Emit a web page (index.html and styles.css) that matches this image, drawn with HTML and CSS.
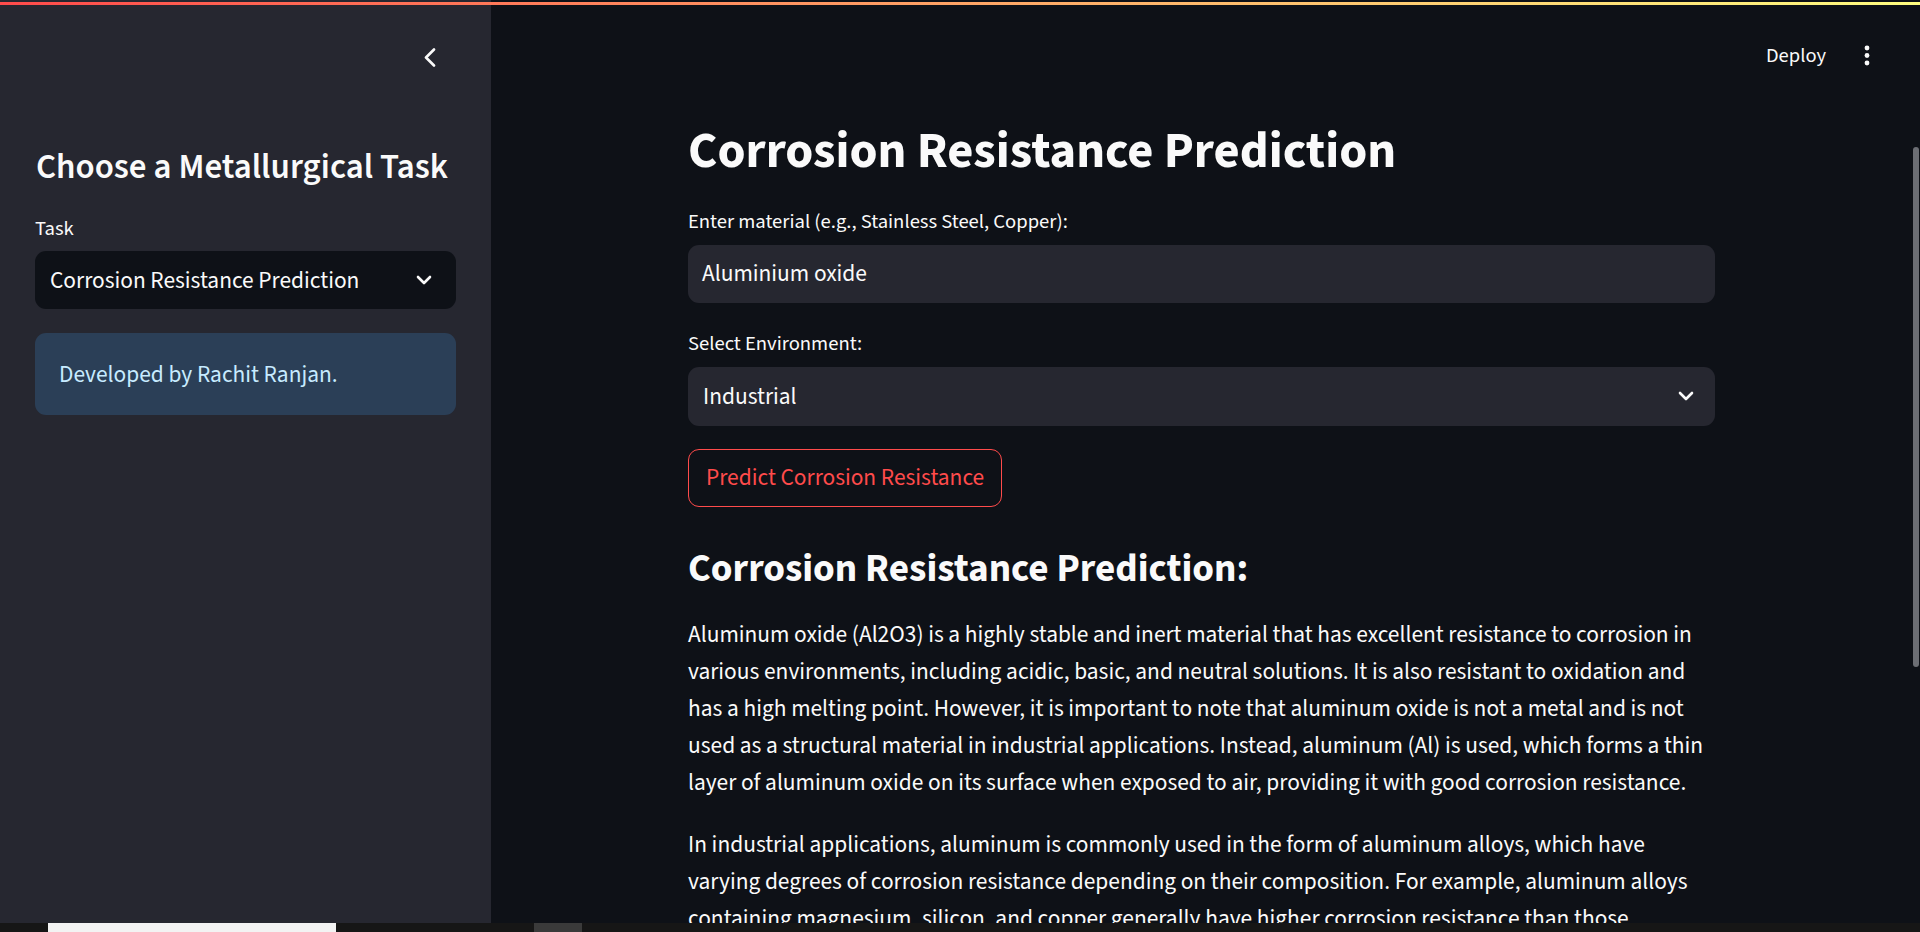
FILE: index.html
```html
<!DOCTYPE html>
<html lang="en">
<head>
<meta charset="utf-8">
<title>Corrosion Resistance Prediction</title>
<link rel="stylesheet" href="styles.css">
</head>
<body>
<div class="app">
  <aside class="sidebar">
    <div class="side-top">
      <button class="collapse" aria-label="Collapse sidebar">
        <svg width="13" height="19" viewBox="0 0 13 19"><polyline points="11,1.5 3,9.5 11,17.5" fill="none" stroke="#fafafa" stroke-width="2.6" stroke-linecap="round" stroke-linejoin="round"/></svg>
      </button>
    </div>
    <h2 class="side-title">Choose a Metallurgical Task</h2>
    <div class="label">Task</div>
    <div class="select select-dark">
      <span>Corrosion Resistance Prediction</span>
      <svg class="chev" width="16" height="11" viewBox="0 0 16 11"><polyline points="2,2 8,8 14,2" fill="none" stroke="#fafafa" stroke-width="2.6" stroke-linecap="round" stroke-linejoin="round"/></svg>
    </div>
    <div class="info">Developed by Rachit Ranjan.</div>
  </aside>

  <main class="main">
    <header class="header">
      <span class="deploy">Deploy</span>
      <svg class="kebab" width="6" height="22" viewBox="0 0 6 22"><circle cx="3" cy="3" r="2.4" fill="#fafafa"/><circle cx="3" cy="10.5" r="2.4" fill="#fafafa"/><circle cx="3" cy="18" r="2.4" fill="#fafafa"/></svg>
    </header>

    <div class="block">
      <h1 class="title">Corrosion Resistance Prediction</h1>

      <div class="label label-first">Enter material (e.g., Stainless Steel, Copper):</div>
      <div class="input">Aluminium oxide</div>

      <div class="label">Select Environment:</div>
      <div class="select select-main">
        <span>Industrial</span>
        <svg class="chev" width="16" height="11" viewBox="0 0 16 11"><polyline points="2,2 8,8 14,2" fill="none" stroke="#fafafa" stroke-width="2.6" stroke-linecap="round" stroke-linejoin="round"/></svg>
      </div>

      <button class="btn">Predict Corrosion Resistance</button>

      <h3 class="subtitle">Corrosion Resistance Prediction:</h3>

      <p class="para">Aluminum oxide (Al2O3) is a highly stable and inert material that has excellent resistance to corrosion in various environments, including acidic, basic, and neutral solutions. It is also resistant to oxidation and has a high melting point. However, it is important to note that aluminum oxide is not a metal and is not used as a structural material in industrial applications. Instead, aluminum (Al) is used, which forms a thin layer of aluminum oxide on its surface when exposed to air, providing it with good corrosion resistance.</p>

      <p class="para para-next">In industrial applications, aluminum is commonly used in the form of aluminum alloys, which have varying degrees of corrosion resistance depending on their composition. For example, aluminum alloys containing magnesium, silicon, and copper generally have higher corrosion resistance than those containing other elements. Protective coatings and anodizing can further improve their performance in industrial atmospheres.</p>
    </div>

    <div class="scroll-thumb"></div>
  </main>
</div>

<div class="taskbar">
  <span class="tb-white"></span>
  <span class="tb-gray"></span>
</div>

<div class="decoration"></div>
</body>
</html>
```
FILE: styles.css
```css
html, body {
  margin: 0;
  padding: 0;
  height: 932px;
  overflow: hidden;
  background: #0e1117;
}

body {
  font-family: "Source Sans 3", "Source Sans Pro", Lato, sans-serif;
  color: #fafafa;
  position: relative;
}

.app {
  display: flex;
  height: 923px;
}

/* ---------- sidebar ---------- */
.sidebar {
  width: 491px;
  flex: none;
  box-sizing: border-box;
  background: #262730;
  padding: 0 35px;
  display: flex;
  flex-direction: column;
}

.side-top {
  height: 146px;
  box-sizing: border-box;
  padding-top: 48px;
  padding-right: 20px;
  display: flex;
  justify-content: flex-end;
  align-items: flex-start;
}

.collapse {
  background: none;
  border: 0;
  padding: 0;
  width: 13px;
  height: 19px;
  display: block;
}

.collapse svg { display: block; }

.side-title {
  margin: 0;
  font-size: 34.9px;
  font-weight: 600;
  line-height: 42px;
  padding-left: 1px;
}

.label {
  font-size: 20.6px;
  line-height: 28px;
  margin-top: 26.5px;
  color: #fafafa;
}

.select {
  display: flex;
  align-items: center;
  justify-content: space-between;
  border-radius: 11px;
  font-size: 23.4px;
  box-sizing: border-box;
}

.select-dark {
  margin-top: 8.5px;
  height: 58px;
  background: #0e1117;
  padding: 0 24px 0 15px;
}

.chev { display: block; flex: none; }

.info {
  margin-top: 24px;
  height: 82px;
  box-sizing: border-box;
  border-radius: 11px;
  background: #2b3f57;
  color: #c7ebff;
  font-size: 23.4px;
  padding: 0 24px;
  display: flex;
  align-items: center;
}

/* ---------- main ---------- */
.main {
  flex: 1;
  position: relative;
  background: #0e1117;
  overflow: hidden;
}

.header {
  height: 100px;
  box-sizing: border-box;
  display: flex;
  justify-content: flex-end;
  align-items: flex-start;
  padding-right: 50px;
  padding-top: 41.6px;
}

.deploy {
  font-size: 20.5px;
  line-height: 28px;
  color: #fafafa;
  margin-right: 38px;
}

.kebab {
  display: block;
  margin-top: 3px;
}

.block {
  margin-left: 197px;
  width: 1027px;
  padding-top: 20.6px;
}

.title {
  margin: 0;
  font-size: 50.6px;
  font-weight: 700;
  line-height: 60.7px;
}

.block .label { margin-top: 27.5px; }
.block .label-first { margin-top: 26.5px; }
.block .label + .select { margin-top: 9.1px; }

.input {
  margin-top: 9.2px;
  height: 57.7px;
  box-sizing: border-box;
  background: #262730;
  border-radius: 11px;
  font-size: 23.4px;
  padding: 0 14px;
  display: flex;
  align-items: center;
}

.select-main {
  height: 58.4px;
  background: #262730;
  padding: 0 21px 0 15px;
}

.btn {
  display: block;
  margin-top: 23.6px;
  height: 57.4px;
  box-sizing: border-box;
  padding: 0 17px;
  background: #0e1117;
  border: 1px solid #ff4b4b;
  border-radius: 11px;
  color: #ff4b4b;
  font-family: inherit;
  font-size: 23.4px;
}

.subtitle {
  margin: 39.3px 0 0;
  font-size: 39.2px;
  font-weight: 700;
  line-height: 47px;
}

.para {
  margin: 24.5px 0 0;
  font-size: 23.4px;
  line-height: 36.8px;
}

.para-next { margin-top: 25.5px; }

.scroll-thumb {
  position: absolute;
  right: 1px;
  top: 147px;
  width: 6px;
  height: 520px;
  border-radius: 3px;
  background: #6c6e74;
}

/* ---------- overlays ---------- */
.decoration {
  position: absolute;
  top: 2px;
  left: 0;
  right: 0;
  height: 3px;
  background: linear-gradient(90deg, #ff4b4b, #fffd80);
}

.taskbar {
  height: 9px;
  background: #161616;
  position: relative;
  display: flex;
}

.tb-white {
  margin-left: 48px;
  width: 288px;
  height: 9px;
  background: #f3f3f3;
}

.tb-gray {
  margin-left: 198px;
  width: 48px;
  height: 9px;
  background: #3a3a3a;
}
```
